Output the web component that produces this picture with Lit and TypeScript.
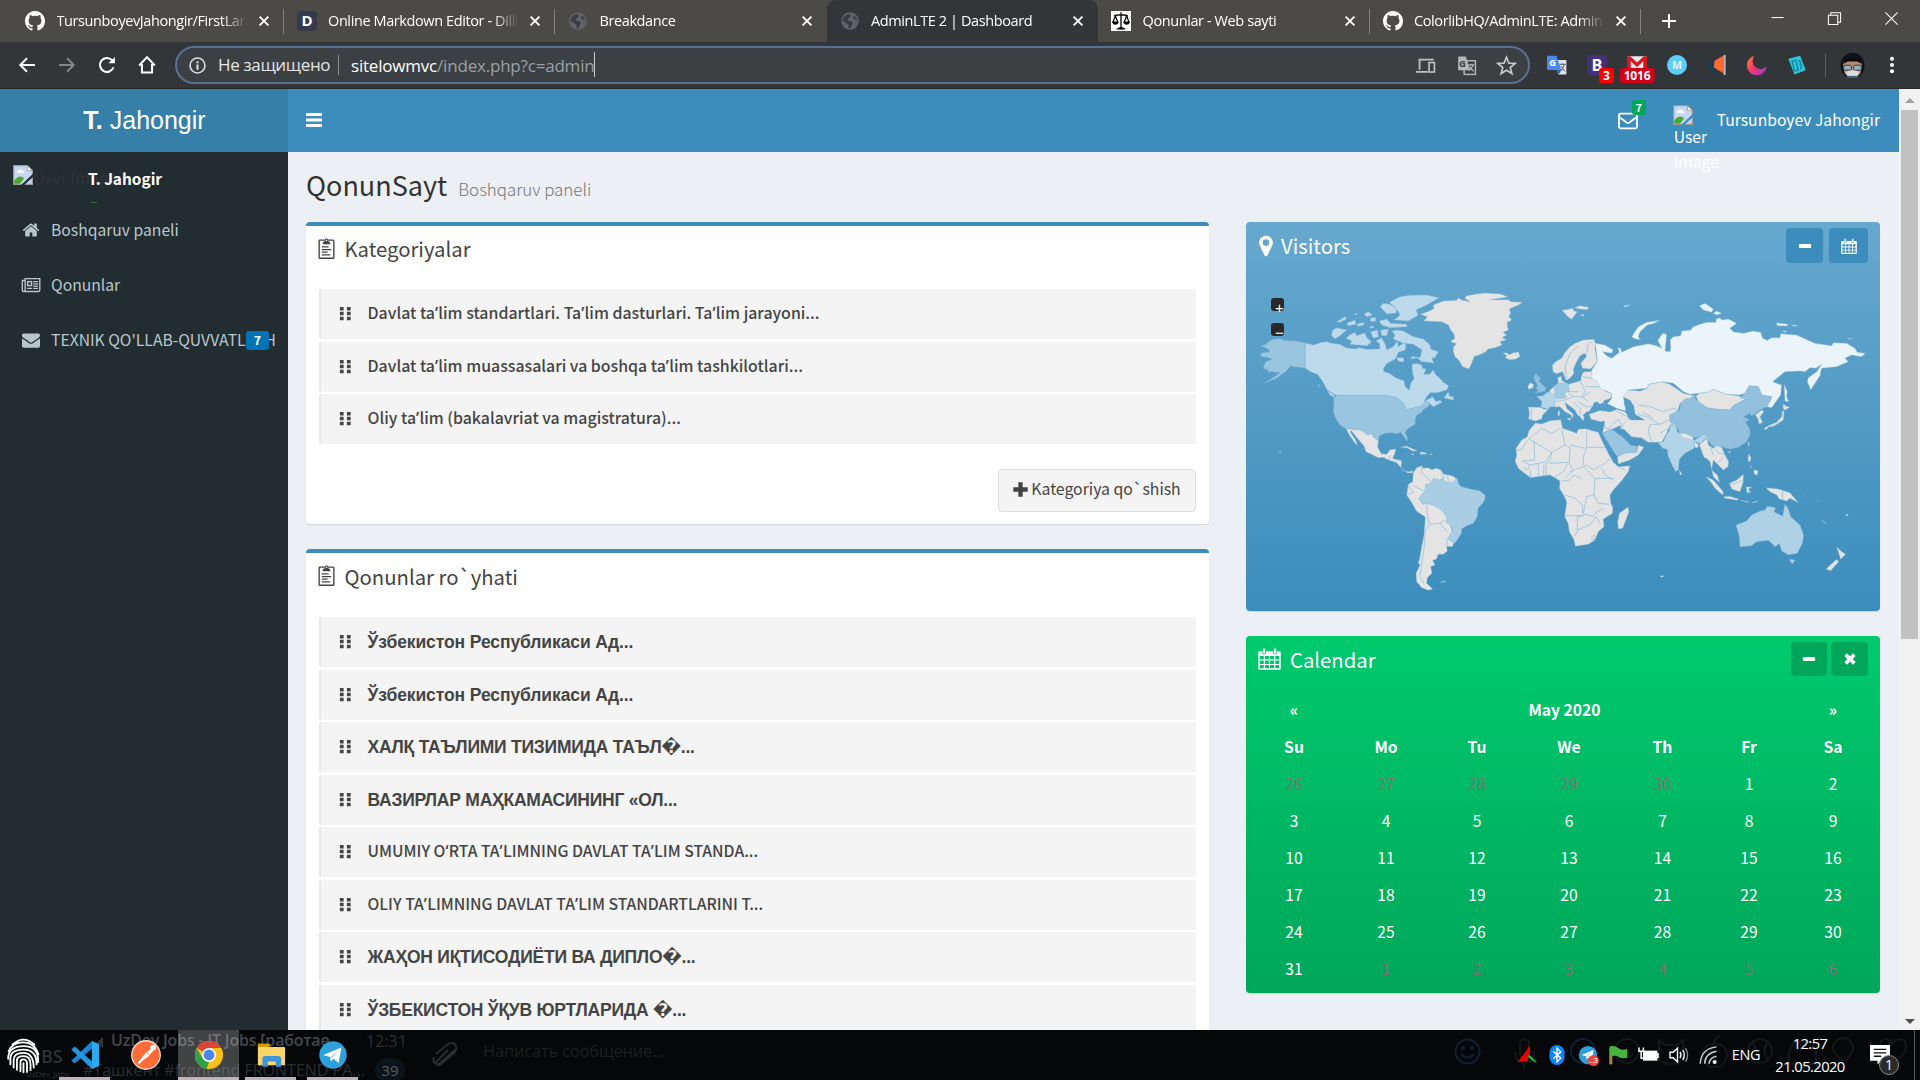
import { LitElement, html, svg, css, nothing } from "lit";
import { customElement, property } from "lit/decorators.js";

const ICONS: Record<string, any> = {
  github: svg`<path fill="#fff" d="M8 0C3.580 0 0 3.580 0 8c0 3.540 2.290 6.530 5.470 7.590.4.070.55-.17.55-.38 0-.19-.01-.82-.01-1.490-2.010.37-2.530-.49-2.690-.94-.09-.23-.48-.94-.82-1.130-.28-.15-.68-.52-.01-.53.63-.01 1.080.58 1.230.82.72 1.210 1.870.87 2.330.66.070-.52.28-.87.51-1.070-1.780-.2-3.640-.89-3.640-3.950 0-.87.31-1.590.82-2.150-.08-.2-.36-1.020.08-2.120 0 0 .67-.21 2.200.82.64-.18 1.320-.27 2-.27s1.360.09 2 .27c1.530-1.040 2.200-.82 2.200-.82.44 1.100.16 1.920.08 2.120.51.56.82 1.270.82 2.150 0 3.070-1.870 3.750-3.650 3.950.29.25.54.73.54 1.480 0 1.070-.01 1.930-.01 2.200 0 .21.15.46.55.38A8 8 0 0 0 16 8c0-4.420-3.580-8-8-8z"/>`,
  dmark: svg`<rect width="16" height="16" rx="3" fill="#35394c"/><text x="8" y="12.200" font-size="12" font-weight="700" font-family="Open Sans, sans-serif" text-anchor="middle" fill="#fff">D</text>`,
  globe: svg`<circle cx="8" cy="8" r="7" fill="#5f6368"/><path fill="#3a3d40" d="M3.500 4.500Q6 1.800 8.500 3L8 5 6 6.500l1 1.500 2.500.3 1 1.700-1.500 1.500L8.500 14 7 13.500l-.3-2.500L4 9 1.800 7.800Q2 6 3.500 4.500zM11 3.500l2 1.700.6 2-1.600-.2-1.500-1.500z"/>`,
  scales: svg`<rect width="16" height="16" fill="#fff"/><g fill="none" stroke="#111" stroke-width="1.100"><path d="M8 1v13M2.500 4q5.500-2 11 0M4.500 14.300h7"/><path d="M3.500 4L1.500 9h4zM12.500 4l-2 5h4z"/></g><path d="M1 9h5q-.5 2-2.500 2T1 9zM10 9h5q-.5 2-2.500 2T10 9zM6 13h4v1.500H6z"/>`,
  close: svg`<path d="M3 3l10 10M13 3L3 13" stroke="#fff" stroke-width="2.200"/>`,
  plus: svg`<path d="M8 1v14M1 8h14" stroke="#fff" stroke-width="2"/>`,
  back: svg`<path d="M15 8H2M8 2L2 8l6 6" fill="none" stroke="#fff" stroke-width="1.700"/>`,
  fwd: svg`<path d="M1 8h13M8 2l6 6-6 6" fill="none" stroke="#85878a" stroke-width="1.700"/>`,
  reload: svg`<path d="M13.800 10A6.200 6.200 0 1 1 12.500 3.700L14 5.200" fill="none" stroke="#fff" stroke-width="1.800"/><path d="M15 .8v5.700H9.300z" fill="#fff"/>`,
  home: svg`<path d="M1 8.500L8 1l7 7.500M3.500 7v7.700h9V7" fill="none" stroke="#fff" stroke-width="1.800"/>`,
  info: svg`<circle cx="8" cy="8" r="7" fill="none" stroke="#dcdde0" stroke-width="1.500"/><path d="M8 4v1.800M8 7v5" stroke="#dcdde0" stroke-width="2"/>`,
  devices: svg`<path d="M15 3H3v8.500M0 13.300h10" fill="none" stroke="#bfc1c4" stroke-width="1.500"/><rect x="11" y="5.500" width="4.500" height="8" fill="none" stroke="#bfc1c4" stroke-width="1.400"/>`,
  translate: svg`<rect x="6" y="4" width="9.500" height="11.500" fill="none" stroke="#b5b7ba" stroke-width="1.200"/><path d="M1 .5h6.500l3.500 11.500H1z" fill="#b5b7ba"/><text x="4.500" y="9" font-size="8" font-weight="700" text-anchor="middle" font-family="Open Sans, sans-serif" fill="#3c4043">G</text><path d="M9.500 7.500h5M12 6.500v1M13.500 7.500q-1 3.500-3.500 5M10.500 9l3.500 4" stroke="#b5b7ba" fill="none"/>`,
  star: svg`<path d="M8 1l2 5 5.300.3-4.200 3.400 1.500 5.100L8 12l-4.600 2.800 1.500-5.100L.7 6.300 6 6z" fill="none" stroke="#c6c8ca" stroke-width="1.400"/>`,
  gtrans: svg`<path d="M6 4h9.500v11.500H9z" fill="#dfe1e4"/><path d="M0 .5h7.500L11.500 12H1q-1 0-1-1z" fill="#4a89f3"/><path d="M8 12h3.500L9.500 15.500z" fill="#2b5fc0"/><text x="4.500" y="8.800" font-size="7.500" font-weight="700" text-anchor="middle" font-family="Open Sans, sans-serif" fill="#fff">G</text><path d="M10 7.500h5M12.500 6.500v1M14 7.500q-1 3-3 5M11 9l3.500 4" stroke="#69717c" fill="none" stroke-width=".9"/>`,
  boot: svg`<rect width="16" height="16" rx="3" fill="#45307a"/><text x="8" y="12.500" font-size="13" font-weight="700" text-anchor="middle" font-family="Open Sans, sans-serif" fill="#fff">B</text>`,
  gmail: svg`<rect y="1" width="16" height="12" fill="#e9e9e9"/><path d="M0 1h2.500L8 6l5.500-5H16v12h-3V5L8 9.500 3 5v8H0z" fill="#d8141c"/>`,
  mcircle: svg`<circle cx="8" cy="8" r="8" fill="#5dcdfa"/><text x="8" y="11" font-size="8.500" font-weight="700" text-anchor="middle" font-family="Open Sans, sans-serif" fill="#e2f7ff">M</text>`,
  horn: svg`<path d="M1 5l5-.5L5 10.500H1q-2-2.500 0-5.500zM3 10h3l1.500 5-4 .5z" fill="#1d3b52"/><path d="M6 4.500L13.300.3V14.500L5.500 10z" fill="#ff6a33"/><path d="M13.300 0h1.600v16h-1.600z" fill="#b9bec2"/>`,
  moon: svg`<defs><linearGradient id="mg" x1="0" y1="0" x2="1" y2="1"><stop offset="0" stop-color="#ff7b35"/><stop offset=".5" stop-color="#f0386b"/><stop offset="1" stop-color="#8a39d8"/></linearGradient></defs><path d="M6 .5A8 8 0 1 0 15.800 9 6 6 0 0 1 6 .5z" fill="url(#mg)"/>`,
  note: svg`<path d="M1 3l9.500-2.500L15 12l-9 3.500z" fill="#2fc4dd"/><path d="M4 5l3-.7L9 12l-3 .8zM9 4.500q2.500 0 1.500 3 2 1 0 4" fill="none" stroke="#0e7f96"/>`,
  avatar: svg`<ellipse cx="8" cy="8" rx="7.700" ry="8.200" fill="#111217"/><path d="M2 7q0-3 6-3t6 3-1 6l-2 2H5l-2-2Q2 10 2 7z" fill="#b88a75"/><path d="M2 7q1-4 6-4t6 4l-3-1.500H5z" fill="#0c0c10"/><rect x="2.300" y="7.800" width="5" height="3.200" rx="1" fill="#8fb2bd" stroke="#222" stroke-width=".5"/><rect x="8.700" y="7.800" width="5" height="3.200" rx="1" fill="#8fb2bd" stroke="#222" stroke-width=".5"/><path d="M3.500 12q4.500-2 9 0l-1.300 2.500H4.800z" fill="#d3dfe2"/><path d="M4 15h8l-1 1H5z" fill="#2a6a8f"/>`,
  dots: svg`<g fill="#fff"><circle cx="8" cy="2.500" r="1.800"/><circle cx="8" cy="8" r="1.800"/><circle cx="8" cy="13.500" r="1.800"/></g>`,
  bars: svg`<path d="M0 1h16v3H0zM0 6.500h16v3H0zM0 12h16v3H0z" fill="currentColor"/>`,
  mailo: svg`<rect x=".8" y="2" width="14.400" height="11.800" rx="1.200" fill="none" stroke="#fff" stroke-width="1.400"/><path d="M1 5q4.500 3 6 4.300 1 .8 2 0Q10.500 8 15 5" fill="none" stroke="#fff" stroke-width="1.400"/>`,
  broken: svg`<path d="M.5.5h11l4 4v11H.5z" fill="#c7d8f2" stroke="#9a9a9a"/><path d="M11.500.5v4h4z" fill="#fff" stroke="#9a9a9a" stroke-width=".7"/><path d="M3 6q0-2 2-2 2-1 3 1 1.500 0 1 1.500z" fill="#fff"/><path d="M1 15v-2.500Q5 7 9 10.500L5.500 15z" fill="#4ba82e"/><path d="M16 7L6.500 16H9l7-6.500z" fill="currentColor"/>`,
  fahome: svg`<path transform="scale(.008929)" fill="currentColor" d="M1472 992v480q0 26-19 45t-45 19h-384v-384h-256v384h-384q-26 0-45-19t-19-45v-480q0-1 .5-3t.5-3l575-474 575 474q1 2 1 6zm223-69l-62 74q-8 9-21 11h-3q-13 0-21-7l-692-577-692 577q-12 8-24 7-13-2-21-11l-62-74q-8-10-7-23.500t11-21.500l719-599q32-26 76-26t76 26l244 204v-195q0-14 9-23t23-9h192q14 0 23 9t9 23v408l219 182q10 8 11 21.500t-7 23.500z"/>`,
  news: svg`<path d="M2.800 4H.3v8.600q0 1.200 1.100 1.200h13q1.400 0 1.400-1.200V2.300H2.800v10q0 1.300-1.200 1.300" fill="none" stroke="currentColor" stroke-width="1.200"/><rect x="5" y="5" width="3.500" height="3.500" fill="none" stroke="currentColor" stroke-width="1.300"/><path d="M10 5h4.300M10 7h4.300M10 9h4.300M4.500 11h4.500M10 11h4.300" stroke="currentColor" stroke-width="1.200"/>`,
  envelope: svg`<path transform="scale(.008929)" fill="currentColor" d="M1792 710v794q0 66-47 113t-113 47h-1472q-66 0-113-47t-47-113v-794q44 49 101 87 362 246 497 345 57 42 92.500 65.500t94.500 48 110 24.500h2q51 0 110-24.500t94.500-48 92.500-65.500q170-123 498-345 57-39 100-87zm0-294q0 79-49 151t-122 123q-376 261-468 325-10 7-42.500 31t-54 38.500-52 32.500-57.500 27-50 9h-2q-23 0-50-9t-57.500-27-52-32.500-54-38.500-42.500-31q-91-64-262-182.500t-205-142.500q-62-42-117-115.500t-55-136.500q0-78 41.500-130t118.500-52h1472q65 0 112.500 47t47.500 113z"/>`,
  clipboard: svg`<rect x="1" y="2" width="14" height="17.300" rx=".8" fill="none" stroke="currentColor" stroke-width="1.300"/><path d="M4.200 6Q4.200 3.600 6.300 3q0-2.700 1.700-2.700T9.700 3q2.100.6 2.100 3z" fill="currentColor"/><circle cx="8" cy="2.200" r=".8" fill="#fff"/><path d="M3.500 8.500h6.500M3.500 11h9M3.500 13.500h5.500M3.500 16h8" stroke="currentColor" stroke-width="1.200"/>`,
  marker: svg`<path transform="scale(.008929)" fill="currentColor" d="M1152 640q0-106-75-181t-181-75-181 75-75 181 75 181 181 75 181-75 75-181zm256 0q0 109-33 179l-364 774q-16 33-47.500 52t-67.500 19-67.500-19-46.500-52l-365-774q-33-70-33-179 0-212 150-362t362-150 362 150 150 362z"/>`,
  calendar: svg`<path d="M1 3h14q.8 0 .8 1v11q0 .9-.8.9H1q-.8 0-.8-.9V4Q.2 3 1 3z" fill="#fff"/><path d="M3.200.8h2v4h-2zM10.800.8h2v4h-2z" fill="#fff" stroke="var(--bg)" stroke-width=".5"/><g fill="var(--bg)"><path d="M1.400 6.300h2.600v2.300H1.400zM4.800 6.300h2.800v2.300H4.800zM8.400 6.300h2.800v2.300H8.400zM12 6.300h2.600v2.300H12zM1.400 9.400h2.600v2.400H1.400zM4.800 9.400h2.800v2.400H4.800zM8.400 9.400h2.800v2.400H8.400zM12 9.400h2.600v2.400H12zM1.400 12.600h2.600v2.100H1.400zM4.800 12.600h2.800v2.100H4.800zM8.400 12.600h2.800v2.100H8.400zM12 12.600h2.600v2.100H12z"/></g>`,
  minus: svg`<rect x="1" y="5.800" width="14" height="4.400" rx="1.200" fill="currentColor"/>`,
  times: svg`<path d="M3 3l10 10M13 3L3 13" stroke="currentColor" stroke-width="4.200"/>`,
  add: svg`<path d="M8 .3v15.400M.3 8h15.400" stroke="currentColor" stroke-width="4.600"/>`,
  grip: svg`<g fill="currentColor"><path d="M2 1h4v3.700H2zM2 6.200h4v3.700H2zM2 11.400h4v3.700H2zM9.500 1h4v3.700h-4zM9.500 6.200h4v3.700h-4zM9.500 11.400h4v3.700h-4z"/></g>`,
  winmin: svg`<path d="M1.500 7h13" stroke="#fff" stroke-width="1.100"/>`,
  winmax: svg`<path d="M1.500 4.500h10v10h-10zM4 4.500V1.800h10.500V12h-3" fill="none" stroke="#fff" stroke-width="1.100"/>`,
  winclose: svg`<path d="M1.500 1.500l13 13M14.500 1.500l-13 13" stroke="#fff" stroke-width="1.100"/>`,
  finger: svg`<g fill="none" stroke="#fff" stroke-width=".85" stroke-linecap="round"><path d="M3 3Q8-1.500 13 3M1.200 6Q3 2 8 2t6.800 5.500M1 9.500Q1 3.700 8 3.700t6.700 7.300M2 12V9.500Q2 5.300 8 5.300T14 12M3.500 13.500V10Q3.500 6.800 8 6.800t4.700 6.700M5 14.500V10Q5.200 8.300 8 8.300q3.200 0 3.200 3.700v2.700M6.600 15.200V11q0-1.200 1.400-1.200t1.600 1.700v4M8 15.700V11.500"/></g>`,
  vscode: svg`<path d="M11.700.5L15.500 2.200v11.600l-3.800 1.700z" fill="#2aa8f2"/><path d="M11.700.5v4.200L2.500 12.500.7 11z" fill="#1c85d1"/><path d="M11.700 15.500v-4.200L2.500 3.500.7 5z" fill="#2596e0"/>`,
  postman: svg`<circle cx="8" cy="8" r="7.600" fill="#ff6c37" stroke="#f6d9cd" stroke-width=".7"/><path d="M4 12.500L8.500 7l1.500 1.200zM8.500 6.500l2.200-2 1.300 1.200-2 2z" fill="#fff"/><circle cx="11.800" cy="4" r="1.500" fill="#fff"/><path d="M4 12.500L8.500 7" stroke="#fff" stroke-width="1.100"/>`,
  chrome: svg`<circle cx="8" cy="8" r="7.500" fill="#fbc116"/><path d="M8 8L1.500 4.250A7.500 7.500 0 0 1 14.500 4.250H8z" fill="#db4437"/><path d="M1.500 4.250L4.700 10 8 11.600l-1.300 3.800A7.500 7.500 0 0 1 1.500 4.250z" fill="#2fa04e"/><circle cx="8" cy="8" r="3.700" fill="#fff"/><circle cx="8" cy="8" r="2.900" fill="#4a86f0"/>`,
  folder: svg`<path d="M1 2h6l1 1.500H1z" fill="#d99a08"/><path d="M1 2h6v3H1z" fill="#d99a08"/><rect x="1" y="3.700" width="14.500" height="9.800" rx=".5" fill="#fbd567"/><path d="M3.400 14.300V10q0-1.500 1.500-1.500h7q1.500 0 1.500 1.500v4.300h-2.900V11.500H6.300v2.800z" fill="#3f94d9"/>`,
  telegram: svg`<circle cx="8" cy="8" r="7.300" fill="#2ca1db"/><path d="M2.800 8L12.500 4 11 12.200 8.200 10 6.800 11.500 6.500 9z" fill="#fff"/><path d="M6.500 9l4.500-3.700-3.500 4.500z" fill="#bcd9ea"/>`,
  radar: svg`<path d="M.5 13.500L8 4l1.500-3.500L10.500 3l-1 6-1.500 4.500-2-1z" fill="#f00000"/><path d="M9.500 7.500l6.500 6.500-2-.5-5-4z" fill="#0cdb3b"/>`,
  bt: svg`<rect x="2" y="0" width="12" height="16" rx="6" fill="#0a84ff"/><path d="M5 5l6 5.500L8 13.500v-11l3 3L5 11" fill="none" stroke="#fff" stroke-width="1.100"/>`,
  flag: svg`<path d="M1 2h2.500v13.500H1z" fill="#b07a45"/><path d="M1.500 1q4-1 7 1.500T15.500 3v7q-4 1.500-7-.5t-7 0z" fill="#46b441"/>`,
  battery: svg`<rect x="4.500" y="5" width="10.500" height="7" fill="#fff" stroke="#fff"/><path d="M15.200 7H16v3h-.8M.8 2v3h3.500V2M2.500 5v5.500H5" fill="none" stroke="#fff" stroke-width="1.200"/>`,
  speaker: svg`<path d="M.8 5.800h2.500l3.500-3.300v11L3.300 10.200H.8z" fill="none" stroke="#fff" stroke-width="1.100"/><path d="M8.800 5.500q1.500 2.500 0 5M11 4q2.500 4 0 8" fill="none" stroke="#fff" stroke-width="1.100"/><path d="M13.200 2.500q3.300 5.500 0 11" fill="none" stroke="#888" stroke-width="1.100"/>`,
  wifi: svg`<path d="M1 15Q1.500 3 14 1.500M4.500 15Q5 6.500 14 5M8 15q.5-5 6-6" fill="none" stroke="#ccc" stroke-width="1.200"/><circle cx="12.500" cy="13.500" r="1.600" fill="#fff"/>`,
  action: svg`<path d="M0 0h16v12.500H9L6 15.500v-3H0z" fill="#fff"/><path d="M3 3.500h10M3 6.300h10M3 9h6" stroke="#111" stroke-width="1.100"/>`,
};

const icon = (name: string, cls = "") =>
  html`<svg class="ic ${cls}" viewBox=${name === "clipboard" ? "0 0 16 20" : "0 0 16 16"}>${ICONS[name]}</svg>`;

const shared = css`
  :host { display: block; box-sizing: border-box; }
  * { box-sizing: border-box; }
  .ic { display: block; width: 20px; height: 20px; flex: none; overflow: visible; }
`;

@customElement("browser-chrome")
class BrowserChrome extends LitElement {
  static styles = [shared, css`
    :host { height: 89px; font: 14.500px/20px "Open Sans", sans-serif; color: #fff; background: #323639; border-bottom: 1px solid #27292b; }
    .strip { height: 42px; background: #4c4a47; display: flex; padding-left: 12px; }
    .tab { width: 271.500px; height: 42px; padding: 0 10px 0 13px; display: flex; align-items: center; position: relative; }
    .tab .t { flex: 1; margin: 0 8px 0 11.500px; overflow: hidden; white-space: nowrap; letter-spacing: -.4px; -webkit-mask-image: linear-gradient(90deg, #000 86%, transparent); mask-image: linear-gradient(90deg, #000 86%, transparent); }
    .tab .x { width: 16px; height: 16px; margin-right: 2px; padding: 1px; }
    .tab.sep::after { content: ""; position: absolute; right: 0; top: 9px; width: 1px; height: 25px; background: #85837f; }
    .tab.on { background: #323639; border-radius: 9px 9px 0 0; }
    .new { margin: 13px 0 0 20px; width: 16px; height: 16px; }
    .win { margin-left: auto; display: flex; gap: 42px; padding: 11px 21px 0 0; }
    .win .ic { width: 15px; height: 15px; }
    .bar { height: 46px; display: flex; align-items: center; padding: 0 17px 0 18px; }
    .nav { display: flex; gap: 22px; }
    .nav .ic { width: 18px; height: 18px; }
    .omni { margin-left: 19px; width: 1355px; height: 38px; border: 2px solid #5a7096; border-radius: 19px; background: #3c4043; display: flex; align-items: center; padding: 0 12px 0 12px; font-size: 17px; }
    .omni .ic { width: 17px; height: 17px; }
    .ns { margin-left: 12px; color: #e4e5e7; letter-spacing: -.35px; width: 111px; white-space: nowrap; }
    .vs { width: 1px; height: 20px; background: #8b8e91; margin: 0 12px 0 9px; }
    .url { color: #9aa0a6; white-space: nowrap; letter-spacing: -.2px; border-right: 1px solid #c8cbd0; height: 25px; line-height: 25px; margin-top: -2px; padding-top: 1px; }
    .url b { color: #fff; font-weight: 400; }
    .omni .right { margin-left: auto; display: flex; gap: 21.500px; align-items: center; }
    .omni .right .ic { width: 19px; height: 19px; }
    .ext { display: flex; gap: 20px; margin-left: 17px; align-items: center; }
    .e { position: relative; width: 20px; height: 20px; }
    .badge { position: absolute; top: 13px; left: 50%; background: #f00; border-radius: 3px; font: 700 12px/15px "Open Sans", sans-serif; height: 15px; padding: 0 4px; letter-spacing: -.2px; }
    .b0 { transform: translateX(2px); }
    .b1 { transform: translateX(-50%); background: #d0021b; }
    .xs { width: 1px; height: 24px; background: #5c5f62; margin-left: 18px; }
    .av { width: 25px; height: 25px; margin-left: 14px; }
    .more { width: 18px; height: 18px; margin-left: 18px; }
  `];
  render() {
    const tabs = [
      ["github", "TursunboyevJahongir/FirstLaravel", "sep"],
      ["dmark", "Online Markdown Editor - Dillinger", "sep"],
      ["globe", "Breakdance", ""],
      ["globe", "AdminLTE 2 | Dashboard", "on"],
      ["scales", "Qonunlar - Web sayti", "sep"],
      ["github", "ColorlibHQ/AdminLTE: AdminLTE", "sep"],
    ];
    return html`
      <div class="strip">
        ${tabs.map(([i, t, c]) => html`<div class="tab ${c}">${icon(i)}<span class="t">${t}</span>${icon("close", "x")}</div>`)}
        ${icon("plus", "new")}
        <div class="win">${icon("winmin")}${icon("winmax")}${icon("winclose")}</div>
      </div>
      <div class="bar">
        <div class="nav">${["back", "fwd", "reload", "home"].map((n) => icon(n))}</div>
        <div class="omni">
          ${icon("info")}<span class="ns">Не защищено</span><span class="vs"></span>
          <span class="url"><b>sitelowmvc</b>/index.php?c=admin</span>
          <div class="right">${["devices", "translate", "star"].map((n) => icon(n))}</div>
        </div>
        <div class="ext">
          ${["gtrans", "boot", "gmail", "mcircle", "horn", "moon", "note"].map((n) => html`<div class="e">${icon(n)}${n === "boot" ? html`<span class="badge b0">3</span>` : n === "gmail" ? html`<span class="badge b1">1016</span>` : nothing}</div>`)}
        </div>
        <span class="xs"></span>${icon("avatar", "av")}${icon("dots", "more")}
      </div>`;
  }
}

@customElement("side-nav")
class SideNav extends LitElement {
  static styles = [shared, css`
    :host { width: 288px; flex: none; background: #222d32; color: #b8c7ce; }
    .brand { height: 63px; background: #367fa9; color: #fff; text-align: center; font: 25px/62px "Liberation Sans", Arial, sans-serif; padding-left: 1px; }
    .user { height: 50px; padding: 13px 0 0 13px; position: relative; display: flex; color: #222d32; }
    .alt { color: #333; font-size: 16px; line-height: 24px; }
    .name { position: absolute; left: 88px; top: 14px; color: #fff; font-weight: 700; font-size: 15.400px; line-height: 24px; }
    .dash { position: absolute; left: 91px; top: 50px; width: 6px; height: 1px; background: #2f7a3b; }
    .item { height: 55px; display: flex; align-items: center; padding-left: 22px; font-size: 15.700px; white-space: nowrap; position: relative; }
    .item span { margin-left: 11px; }
    .item .ic { width: 18px; height: 18px; }
    .item .count { position: absolute; right: 19px; top: 19px; margin: 0; width: 23px; height: 19px; border-radius: 3px; background: #0073b7; color: #fff; font: 700 12.500px/18px "Noto Sans CJK SC", sans-serif; text-align: center; }
  `];
  render() {
    return html`
      <div class="brand"><b>T.</b> Jahongir</div>
      <div class="user">${icon("broken")}<span class="alt">User Image</span><span class="name">T. Jahogir</span><i class="dash"></i></div>
      <div class="item">${icon("fahome")}<span>Boshqaruv paneli</span></div>
      <div class="item">${icon("news")}<span>Qonunlar</span></div>
      <div class="item">${icon("envelope")}<span>TEXNIK QO'LLAB-QUVVATLASH</span><span class="count">7</span></div>`;
  }
}

@customElement("list-box")
class ListBox extends LitElement {
  @property() heading = "";
  @property({ attribute: false }) rows: string[] = [];
  @property() action = "";
  static styles = [shared, css`
    :host { background: #fff; border-top: 4px solid #3c8dbc; border-radius: 4px; box-shadow: 0 1px 1px rgba(0,0,0,.12); color: #444; padding: 0 13px 0 12.500px; }
    .h { height: var(--head, 63px); display: flex; gap: 10px; font-size: 20.300px; line-height: var(--lh, 45px); margin-left: -1px; }
    .h .ic { width: 17px; height: 21px; margin-top: 12px; }
    .row { height: 50px; margin-bottom: 2.500px; background: #f4f4f4; border-left: 2.500px solid #e6e7e8; border-radius: 2px; display: flex; align-items: center; padding: 0 0 1px 17px; gap: 15px; font-size: 15.900px; font-weight: 500; white-space: nowrap; }
    .row .ic { width: 15px; height: 15px; }
    .cyr { font: 700 17.500px/24px "Liberation Sans", "DejaVu Sans", sans-serif; letter-spacing: -.1px; padding-top: 1px; }
    .cyr.up { letter-spacing: -.24px; }
    .lat { line-height: 23px; margin-top: -1px; }
    .lat.up { font-size: 15.700px; }
    .q { font-family: "Open Sans", sans-serif; font-weight: 600; letter-spacing: .3px; }
    .foot { display: flex; justify-content: flex-end; padding-top: 22.500px; }
    .btn { height: 43px; width: 198px; border: 1px solid #ddd; border-radius: 4px; background: #f4f4f4; display: flex; align-items: center; justify-content: center; gap: 3px; font-size: 15.800px; white-space: nowrap; line-height: 38px; padding-bottom: 3px; }
    .btn .ic { width: 15px; height: 15px; }
  `];
  private label(r: string) {
    const cls = (/[А-я]/.test(r) ? "cyr" : "lat") + (r === r.toUpperCase() ? " up" : "");
    const parts = cls.startsWith("lat") ? r.split(/([‘’])/) : [r];
    return html`<span class=${cls}>${parts.map((p) => (/^[‘’]$/.test(p) ? html`<span class="q">${p}</span>` : p))}</span>`;
  }
  render() {
    return html`
      <div class="h">${icon("clipboard")}<span>${this.heading}</span></div>
      ${this.rows.map((r) => html`<div class="row">${icon("grip")}${this.label(r)}</div>`)}
      ${this.action ? html`<div class="foot"><div class="btn">${icon("add")}<span>${this.action}</span></div></div>` : nothing}`;
  }
}

/* Map units: three per pixel, shared by all shapes; eastern shapes are shifted by 990. */
const WEST: [string, string][] = [
  ["#9ac5e0", "M62 392L80 388 84 381 100 373 118 371 135 377 160 377 196 384V460L182 457 160 455 150 452 147 459 136 470 122 481 105 492 75 503 100 488 122 472 106 472 96 469 86 472 84 464 70 460 76 441 96 433 82 427 62 424 64 415 88 411 86 403z"],
  ["#bcdaeb", "M196 384L220 390 245 382 262 380 270 384 300 388 318 398 345 402 358 398 380 403 420 402 418 385 408 378 425 368 436 388 440 404 460 395 472 378 475 395 490 384 498 390 496 405 475 412 466 432 440 446 430 462 432 470 448 475 470 490 492 497 496 515 508 526 512 505 522 492 518 475 516 460 518 446 535 446 545 450 547 460 558 462 552 478 568 478 580 465 588 480 600 490 610 502 626 512 620 525 590 533 570 533 560 545 552 560 578 545 588 560 600 556 606 562 580 575 566 563 545 572 496 586 492 568 480 556 465 547 430 541H288L262 525 245 495 232 478 215 472 196 460zM612 548L625 530 628 543 640 545 641 555 625 552zM262 528L280 538 288 550 270 540zM236 508l5 8-5-2z"],
  ["#bcdaeb", "M448 262L480 245 510 241 560 240 597 248 560 270 528 285 535 300 505 318 462 315 480 300 472 285zM420 275L430 265 450 268 470 283 468 294 440 297zM455 348L470 345 490 348 520 365 550 372 570 390 572 402 595 410 585 428 575 430 582 445 565 442 545 440 530 428 512 432 516 424 540 428 546 405 520 388 490 385 460 372 465 360zM318 370L328 360 345 352 350 362 375 353 380 368 395 380 382 392 350 390 330 388 335 378zM274 362L278 345 290 338 320 345 300 362 285 372zM418 318L440 312 452 325 500 328 502 335 450 338 425 330zM392 350L412 345 416 365 400 370zM422 345L446 343 440 362 425 362zM290 320L315 305 320 312 300 322zM320 325L345 315 348 328 325 332zM350 328L370 322 372 330 355 334zM372 298L385 290 398 300 380 305zM392 308L408 308 405 320 390 318zM468 428L490 428 492 440 478 440zM340 298l10-4 2 5zM388 335l12-2 2 5-10 2z"],
  ["#9ac5e0", "M280 541L288 550 288 541H430L465 547 480 556 492 568 496 586 525 578 545 572 558 556 566 563 568 572 548 585 545 592 528 602 525 618 526 627 505 640 495 652 502 668 502 679 490 662 482 652 468 656 455 653 435 655 418 662 415 677 402 668 395 656 383 660 365 646 318 641 300 630 288 612 280 590 282 560zM118 709h5v4h-5z"],
  ["#e4e4e4", "M318 641L365 646 383 660 395 656 402 668 415 677 413 697 424 716 440 718 450 704 468 702 464 716 458 730 485 737 483 755 492 768 505 770 518 768 520 773 502 774 482 757 470 743 445 735 430 727 415 728 378 710 372 693 348 665 335 648 330 650 345 672 353 691 345 685 328 660zM482 697L498 693 515 700 532 708 518 708 500 698zM540 711l12 1 11 5-22 1zM514 717h8v2h-8zM571 717h6v2h-6zM510 683l3 8"],
  ["#e4e4e4", "M520 773L530 758 546 752 550 760 565 758 575 764 590 760 603 765 612 778 636 782 652 792 656 808 600 830 636 945 640 985 638 995 620 994 622 1008 610 1018 594 1018 590 1032 578 1036 585 1050 572 1055 576 1075 562 1088 560 1105 578 1122 565 1126 545 1118 530 1100 528 1075 540 1050 534 1043 538 1035 545 995 552 960 556 906 530 889 518 868 500 840 505 808 518 800zM602 1100h8l-3 4zM611 1098h7l-5 4z"],
  ["#a9cee4", "M556 808L572 805 580 790 600 795 606 788 615 800 640 802 648 790 656 808 665 815 690 822 720 828 735 840 735 852 728 865 714 880 712 905 700 925 680 932 665 942 664 955 652 975 642 986 622 970 638 948 634 932 618 922 620 908 605 885 578 870 560 866 548 868 536 850 548 835 556 828z"],
  ["#e4e4e4", "M541 298L570 287 582 280 580 270 610 258 650 256 654 249 668 256 690 260 674 250 680 242 710 237 735 234 770 236 785 238 803 246 750 254 806 254 812 260 848 262 835 270 808 282 812 295 806 305 816 315 802 322 802 335 806 345 790 352 800 360 786 368 800 374 780 380 786 390 765 398 745 402 735 412 712 422 703 424 695 445 687 462 668 455 656 435 645 425 640 410 640 395 650 386 634 382 634 376 644 372 642 358 632 345 625 330 605 320 552 318 562 305zM789 414L800 413 808 419 820 413 836 411 840 425 825 433 808 434 796 429 800 422z"],
  ["#93c0dc", "M882 488L888 474 893 484 901 488 897 498 908 510 918 518 915 528 885 534 898 525 888 522 893 512 887 502z"],
  ["#e4e4e4", "M863 515L870 503 880 508 879 519 866 523zM865 576L885 577 903 577 910 582 925 583 908 600 905 612 886 618 866 612 868 595z"],
  ["#e4e4e4", "M928 527L945 512 955 503 953 488 963 483 966 497 985 508 1022 497 1025 480 1032 470 1060 469 1070 500 1085 507 1095 528 1115 535 1112 550 1090 558 1095 568 1083 572 1072 560 1062 563 1060 575 1060 588 1040 590 1028 602 1033 605 1030 618 1020 605 1012 600 1005 585 985 570 975 562 980 580 1000 598 997 612 993 600 975 590 960 575 945 577 940 555zM980 609l13 1-3 7zM954 588l5-1v14l-5 2z"],
  ["#e4e4e4", "M937 450L950 438 965 430 975 412 990 395 1005 385 1030 375 1062 373 1067 385 1065 400 1072 440 1052 462 1028 460 1022 445 1040 424 1034 415 1020 422 1010 440 1000 462 1002 475 990 490 978 496 968 470 950 476 939 470zM966 285L978 284 998 280 1002 288 1012 290 995 313 985 307zM1003 278L1020 272 1048 277 1040 284 1018 282zM1020 300l12-2v6z"],
  ["#b5d6e9", "M890 543L908 543 925 530 948 543 943 560 946 575 930 576 926 582 903 577 906 560z"],
  ["#9fcbe3", "M945 512L958 503 985 507 988 528 972 536 980 548 950 552 943 535z"],
  ["#e4e4e4", "M886 624L905 627 930 617 962 614 968 640 990 647 1010 655 1015 643 1035 641 1075 652 1085 675 1105 715 1120 742 1135 755 1170 752 1165 770 1145 797 1120 825 1110 840 1112 865 1118 875 1118 895 1090 912 1092 935 1075 950 1065 975 1045 988 1006 994 1002 975 988 950 984 925 974 905 980 862 972 842 958 820 960 798 945 788 930 780 900 784 872 788 850 772 835 760 825 738 830 722 828 700 845 675 862 665 866 648z"],
];
const EAST: [string, string][] = [
  ["#e4e4e4", "M58 597L90 586 120 590 138 582 165 590 172 600 185 612 190 640 230 682 215 668 185 665 165 645 150 632 125 643 97 655 105 618 92 620 62 612z"],
  ["#e4e4e4", "M158 545L163 530 175 525 210 528 232 520 235 508 275 500 300 508 340 535 378 543 330 565 325 585 300 605 318 630 300 630 290 655 275 682 235 682 215 668 185 665 165 645 150 640 172 612 182 615 225 615 195 598 192 575 178 555z"],
  ["#9ac5e0", "M97 655L125 643 160 668 172 680 180 690 203 695 200 712 165 715 142 725 130 708z"],
  ["#e4e4e4", "M142 725L165 715 200 712 205 690 222 697 205 720 180 735 145 747z"],
  ["#e4e4e4", "M378 543L388 535 420 530 428 522 470 538 505 542 528 552 490 572 480 585 440 583 410 578 385 560z"],
  ["#eaf4fa", "M76 385L105 390 130 405 125 415 98 410 110 422 125 430 148 412 143 398 152 400 155 412 190 395 235 386 260 392 275 400 263 376 278 355 290 358 288 380 285 408 300 410 302 400 300 375 310 365 332 362 335 348 362 345 370 335 390 328 410 322 438 322 438 312 450 308 455 315 475 312 500 325 480 340 490 350 520 355 550 348 572 352 578 370 592 376 605 368 630 368 632 356 680 360 712 375 735 385 785 392 790 383 830 385 855 400 862 412 886 415 875 425 845 420 825 430 835 440 800 455 755 460 750 482 722 525 712 500 715 488 740 470 755 448 738 460 720 458 705 470 690 468 645 470 608 500 635 510 632 540 605 578 590 575 605 545 575 540 565 515 538 512 525 535 508 540 470 538 428 522 420 530 388 535 360 538 340 530 310 505 275 500 235 508 232 520 175 525 160 545 168 588 140 580 112 566 125 550 124 535 90 520 80 500 65 490 65 465 82 440z"],
  ["#eaf4fa", "M185 365L205 335 230 322 270 316 250 326 232 330 210 350 205 366 212 374 195 372zM388 272L405 265 430 282 425 292 400 285zM430 295L440 288 455 295 440 300zM619 323L655 328 650 333 622 332zM666 329l19 3-14 2zM635 348h15l-5 4zM832 371l16-2-8 4zM160 272l22-3-16 7zM642 508L652 530 650 545 656 560 645 558z"],
  ["#93c0dc", "M298 600L330 585 332 565 345 552 360 550 368 542 385 560 410 578 440 583 480 585 490 572 528 552 510 548 525 535 538 512 565 515 575 540 605 545 600 560 590 575 578 580 560 592 545 602 540 595 520 605 538 614 526 622 538 640 540 660 530 680 505 697 480 702 455 695 435 697 425 690 412 672 400 660 380 668 330 655 318 630 300 622zM475 708l8 2-5 8z"],
  ["#b2d4e8", "M265 683L280 680 290 658 298 648 300 628 318 628 322 650 345 665 375 675 400 658 414 664 390 687 375 678 372 700 345 715 328 732 325 765 317 770 306 750 294 722 292 703 278 700z"],
  ["#e4e4e4", "M328 655L345 655 370 666 368 676 340 668zM373 678L386 690 382 700 374 696zM388 690L412 668 415 690 430 700 440 692 455 697 465 720 476 740 474 755 460 765 445 750 430 735 425 765 442 780 449 803 430 785 420 740 412 732 402 727zM328 765l8 12-6 4zM408 785L430 795 460 830 458 840 435 820 425 805zM460 845l18-1 28 8-4 4-37-6zM478 805L500 795 520 778 520 800 510 830 485 822zM528 815l18 2-11 5 8 12-8-3-3 6zM588 818L605 820 625 822 660 833 685 863 660 850 650 858 628 852 620 840 600 830zM535 717l8 10-2 12-7 0zM540 750l6 8-5-2zM552 765l12 2-2 14-10-4zM534 682l5 2-4 12zM582 640L600 630 620 622 635 605 638 585 642 590 640 615 612 633 595 636 588 645zM640 566l8 8 12 2-15 10-6-6zM555 600L575 585 582 590 570 605 578 622 568 628 563 610zM700 840l12 6M735 850l10 12M755 915l15 12-10-5zM826 900l9-4-3 8zM272 1082h8v4h-8zM510 856l28 4-6 2zM545 862l20-4-12 5zM690 838l8-8"],
  ["#aed1e6", "M498 930L530 918 545 900 570 888 585 885 592 874 617 878 612 890 638 904 645 868 655 882 662 905 690 930 701 960 697 985 682 1015 655 1019 635 1008 628 985 616 995 595 976 560 980 545 992 510 995 508 965zM657 1033L675 1035 667 1047z"],
  ["#e4e4e4", "M800 996L815 1010 827 1017 812 1033 808 1020zM800 1033L806 1040 782 1067 768 1062zM174 876L177 890 158 940 145 942 143 920 148 895z"],
];
const BORDERS = "M960 640L935 655 905 640 866 672M866 672L935 712 975 690 965 640M882 678L884 735 845 738M832 704H845L862 676M935 712L918 740 895 745 870 750 862 765 850 758M935 712L930 740 918 745 918 780M930 745L985 742 970 770 945 785M975 690L990 697 988 745 1000 765 975 790M1040 648V697H1095M1040 697L1030 725 1030 750M1035 700L990 690M990 770L1040 750 1060 765 1095 745 1110 732M1030 755L1065 790 1110 790 1122 790M1065 790L1062 840 1075 865 1108 868M1062 840L1040 845 1030 895M975 840L1005 850 1028 870 1028 895M974 902H1030L1012 905V950L1004 962M1030 897L1060 905 1070 890 1092 880M1012 945L1050 930 1068 905M1068 905L1080 925M963 798L990 795 1000 780 1028 792M872 788L870 762M895 784L895 745M910 782L912 750M1085 760L1095 780 1120 795M1140 758L1155 765M1055 968l8-8 6 8-8 8zM850 740L870 750M975 412M980 490L975 455 990 415 1015 392M1060 380L1045 385 1040 415M874 582V612M943 560L975 555 1000 545 985 535M1000 545L1030 545 1050 530M1022 500L1035 530 1025 545 1045 560M1035 515L1080 515M1015 562L1040 575 1055 575M1000 560L1020 580 1020 600M1030 485L1055 490M985 530L1015 530M560 870L563 905 568 928 600 925 612 915M568 928L556 950 552 1000 543 1060 540 1085 552 1105M600 925L622 950M620 970L622 995M505 812L520 832 505 838M520 812L535 820 556 828M545 755L545 775 560 785 572 800M603 768L612 790 608 798M622 782L625 798M445 735L452 720M460 732L475 740M1195 570L1230 575 1270 590 1300 580 1320 586M1195 598L1220 605 1260 628 1230 628 1225 650 1235 680M1260 628L1285 615 1300 605M1260 655L1285 640 1300 630M1205 590L1240 610M1105 640L1135 612 1150 640M1130 588L1160 605M1425 700L1435 715 1455 718 1465 740M1435 740L1450 730M1628 823V855M1470 808L1485 805 1510 795M1410 690L1420 720M1090 620L1098 640 1115 645";

@customElement("world-map")
class WorldMap extends LitElement {
  static styles = [shared, css`
    :host { position: relative; }
    .map { display: block; width: 634px; height: 339px; }
    .land { stroke: #84b7d6; stroke-width: 1.200; stroke-linejoin: round; fill-rule: nonzero; }
    .line { fill: none; stroke: #86b9d8; stroke-width: 2; stroke-linejoin: round; }
    .sea { fill: #569dca; }
    .z { position: absolute; left: 25px; width: 13px; height: 13px; border-radius: 3px; background: #292929; color: #fff; font: 15px/20px "Liberation Sans", sans-serif; padding-left: 4px; overflow: visible; }
    .in { top: 26px; } .out { top: 51px; }
  `];
  render() {
    return html`
      <svg class="map" viewBox="18 171 1902 1017" preserveAspectRatio="none">
        ${WEST.map(([f, d]) => svg`<path class="land" fill=${f} d=${d}/>`)}
        <g transform="translate(990 0)">
          ${EAST.map(([f, d]) => svg`<path class="land" fill=${f} d=${d}/>`)}
          <path class="sea" d="M162 562L180 554 192 575 188 590 197 600 195 613 182 615 172 605 175 590 165 575z"/>
          <path class="sea" d="M68 572L75 562 90 568 100 562 105 570 140 584 120 590 90 586 65 594 58 588z"/>
        </g>
        <path class="line" d=${BORDERS}/>
      </svg>
      <span class="z in">+</span><span class="z out">−</span>`;
  }
}

@customElement("calendar-grid")
class CalendarGrid extends LitElement {
  static styles = [shared, css`
    .g { display: grid; grid-template-columns: 94px 90px 92px 92px 95px 78px 90px; grid-auto-rows: 37px; text-align: center; line-height: 37px; font-size: 15.700px; }
    b { font-weight: 700; }
    .m { grid-column: 2 / 7; }
    .off { color: #777; }
  `];
  render() {
    const days = [26, 27, 28, 29, 30, ...Array.from({ length: 31 }, (_, i) => i + 1), 1, 2, 3, 4, 5, 6];
    return html`<div class="g">
      <b>«</b><b class="m">May 2020</b><b>»</b>
      ${["Su", "Mo", "Tu", "We", "Th", "Fr", "Sa"].map((d) => html`<b>${d}</b>`)}
      ${days.map((d, i) => html`<span class=${i < 5 || i > 35 ? "off" : ""}>${d}</span>`)}
    </div>`;
  }
}

@customElement("task-bar")
class TaskBar extends LitElement {
  static styles = [shared, css`
    :host { height: 50px; background: #050708; display: flex; position: relative; overflow: hidden; color: #fff; font: 15px/20px "Open Sans", sans-serif; }
    .ghost { position: absolute; white-space: nowrap; color: #45484b; }
    .g1 { left: 111px; top: 0; font-weight: 600; font-size: 16px; letter-spacing: -.2px; }
    .g2 { left: 366px; top: 1px; font-size: 16px; color: #2f3235; }
    .g3 { left: 83px; top: 30px; font-size: 16px; color: #2b2e31; }
    .g4 { left: 375px; top: 28px; width: 30px; height: 24px; border-radius: 12px; background: #0c141b; text-align: center; line-height: 24px; color: #5a5e62; font-size: 15px; }
    .g5 { left: 483px; top: 11px; font-size: 16.500px; color: #1d1f21; letter-spacing: -.2px; }
    .g6 { left: 41px; top: 16px; font-size: 18px; font-weight: 600; color: #303235; }
    .g7 { left: 26px; top: 34px; font-size: 8px; color: #35383a; }
    .gs { position: absolute; left: 0; top: 0; width: 1920px; height: 50px; fill: none; stroke: #15181a; stroke-width: 2; }
    .a { position: relative; height: 50px; display: flex; align-items: center; justify-content: center; }
    .a .ic { width: 30px; height: 30px; }
    .a.run { border-bottom: 3px solid #bcb4b8; padding-top: 3px; }
    .a.on { background: rgba(255,255,255,.24); }
    .start { width: 46px; } .start .ic { width: 35px; height: 35px; }
    .w1 { width: 51px; margin-left: 13px; } .w2 { width: 62px; margin-left: 5px; } .w3 { width: 61px; margin-left: 1px; } .w4 { width: 51px; margin-left: 6px; } .w5 { width: 51px; margin-left: 11px; }
    .tray { position: relative; margin-left: auto; display: flex; align-items: center; padding-right: 30px; }
    .t { width: 30.300px; display: flex; justify-content: center; position: relative; }
    .red { position: absolute; right: 4px; bottom: -1px; background: #ee4444; border-radius: 6px; width: 11px; height: 11px; font-size: 8px; line-height: 10px; text-align: center; }
    .eng { width: 44px; text-align: center; letter-spacing: -.4px; font-size: 14.500px; }
    .clock { width: 81px; text-align: center; line-height: 23px; letter-spacing: -.6px; padding-left: 3px; font-size: 14.800px; white-space: nowrap; }
    .act { margin-left: 21px; position: relative; }
    .one { position: absolute; left: 9px; top: 10px; width: 20px; height: 20px; border-radius: 50%; background: #2b2b2b; border: 1px solid #8a8a8a; text-align: center; line-height: 18px; font-size: 14px; }
    .edge { position: absolute; right: 5px; top: 0; width: 1px; height: 50px; background: #55585a; }
  `];
  render() {
    const app = (n: string, c: string) => html`<div class="a ${c}">${icon(n)}</div>`;
    return html`
      <span class="ghost g1">UzDev Jobs - IT Jobs [работае...</span><span class="ghost g2">12:31</span>
      <span class="ghost g3">#Ташкент #frontend FRONTEND РА...</span><span class="ghost g4">39</span>
      <span class="ghost g5">Написать сообщение...</span><span class="ghost g6">BS</span><span class="ghost g7">UzDev_Jobs</span>
      <svg class="gs" viewBox="0 0 1920 50">
        <path d="M103 7v11l-7-5z" fill="#303336" stroke="none"/>
        <path d="M436 24l12-10q6-3 8 2 1 4-2 7l-14 12q-4 1-4-3l12-12M434 27q-2 8 5 7l16-14" stroke="#2a2d2f"/>
        <g stroke="#0d2138"><circle cx="1467.500" cy="21.500" r="12"/><circle cx="1463" cy="18" r="1"/><circle cx="1472" cy="18" r="1"/><path d="M1461 24q6.500 7 13 0"/></g>
        <rect x="1520" y="9" width="9" height="19" rx="4.500"/><path d="M1515 21q0 12 9.500 12t9.500-12M1524 33v5"/>
        <g stroke="#0d2138"><circle cx="1583" cy="21" r="12"/></g><circle cx="1627" cy="21" r="12"/><path d="M1621 24q6 7 12 0M1659 30V10l6 5h12l6-5v20q-12 8-24 0zM1714 14q-12 0-11 12 4 14 12 10 8 4 12-10 0-12-13-12zq0-6 6-8"/>
        <circle cx="1760" cy="21" r="12"/><path d="M1752 12q8 9 0 18M1768 12q-8 9 0 18M1789 34V22l5-10h17l5 10v12zM1842 30q-9-7-9-12a10 10 0 0 1 20 0q0 5-7 12zM1893 34q-13-9-13-18t10-6l3 3 3-3q10-3 10 6t-13 18z"/>
      </svg>
      ${app("finger", "start")}${app("vscode", "run w1")}${app("postman", "w2")}${app("chrome", "run on w3")}${app("folder", "run w4")}${app("telegram", "run w5")}
      <div class="tray">
        <div class="t">${icon("radar")}</div><div class="t">${icon("bt")}</div>
        <div class="t">${icon("telegram")}<span class="red">..3</span></div>
        <div class="t">${icon("flag")}</div><div class="t">${icon("battery")}</div><div class="t">${icon("speaker")}</div><div class="t">${icon("wifi")}</div>
        <span class="eng">ENG</span>
        <div class="clock">12:57<br>21.05.2020</div>
        <div class="act">${icon("action")}<span class="one">1</span></div>
      </div>
      <i class="edge"></i>`;
  }
}

@customElement("app-root")
class AppRoot extends LitElement {
  static styles = [shared, css`
    :host { width: 1920px; height: 1080px; overflow: hidden; display: flex; flex-direction: column; font-family: "Noto Sans CJK SC", "Open Sans", sans-serif; }
    .page { flex: 1; min-height: 0; display: flex; background: #ecf0f5; }
    .main { flex: 1; min-width: 0; overflow: hidden; }
    .top { height: 63px; background: #3c8dbc; color: #fff; display: flex; position: relative; padding: 0 19px 0 18px; font-size: 15.700px; line-height: 62px; }
    .top .bars { width: 16px; height: 16px; margin-top: 23px; }
    .mail { margin: 22px 0 0 auto; position: relative; height: 20px; width: 20px; }
    .mail em { position: absolute; left: 14px; top: -11px; width: 14px; height: 15px; background: #00a65a; border-radius: 3px; font: 700 11px/15px "Noto Sans CJK SC", sans-serif; text-align: center; }
    .who { margin-left: 35px; width: 31px; padding-top: 16px; line-height: 25px; height: 90px; color: #fff; }
    .who div { margin-left: 1px; }
    .who .ic { color: #3c8dbc; margin-bottom: -1px; }
    .nm { margin-left: 13px; }
    .title { height: 70px; padding: 0 0 0 18px; display: flex; align-items: baseline; gap: 11px; font-size: 27px; line-height: 66px; color: #333; }
    .title small { font-size: 16.900px; font-weight: 300; color: #777; }
    .cols { display: flex; gap: 37px; padding: 0 19px 0 18px; align-items: flex-start; }
    .left { width: 903px; display: flex; flex-direction: column; gap: 25px; }
    .first { height: 302px; }
    .second { height: 600px; --head: 64px; --lh: 46px; }
    .right { flex: 1; display: flex; flex-direction: column; gap: 25px; }
    .card { border-radius: 4px; color: #fff; box-shadow: 0 1px 1px rgba(0,0,0,.12); }
    .blue { --bg: #3c8dbc; height: 389px; background: linear-gradient(#67a8ce, #3c8dbc); }
    .green { --bg: #00a65a; height: 357px; background: linear-gradient(#00ca6d, #00a65a); }
    .ch { height: 50px; display: flex; align-items: flex-start; padding: 6px 12px 0 10px; font-size: 20.300px; line-height: 35px; }
    .ch > .ic { margin: 6px 3px 0 -2px; width: 24px; height: 24px; }
    .green .ch > .ic { width: 23px; height: 23px; margin: 5px 9px 0 2px; --bg: #00c468; }
    .tools { margin-left: auto; display: flex; gap: 6px; }
    .green .tools { gap: 4px; }
    .tb { height: 35px; width: 37px; border-radius: 4px; background: var(--bg); display: flex; align-items: center; justify-content: center; }
    .green .tb { height: 34px; width: 36px; }
    .tb + .tb { width: 39px; }
    .green .tb + .tb { width: 37px; }
    .tb .ic { width: 14px; height: 14px; }
    .blue .tb + .tb .ic { width: 16px; height: 16px; }
    .cal { padding-top: 5px; padding-left: 1px; }
    .sb { width: 21px; background: #f1f1f1; display: flex; flex-direction: column; align-items: center; justify-content: space-between; padding: 9px 0 6px; }
    .sb .th { width: 17px; height: 529px; background: #c1c1c1; margin: 7px 0 auto; }
    .up { border: 5px solid transparent; border-top: 0; border-bottom-color: #a3a3a3; }
    .dn { border: 5px solid transparent; border-bottom: 0; border-top-color: #505050; }
  `];
  render() {
    return html`
      <browser-chrome></browser-chrome>
      <div class="page">
        <side-nav></side-nav>
        <div class="main">
          <div class="top">
            ${icon("bars", "bars")}
            <div class="mail">${icon("mailo")}<em>7</em></div>
            <div class="who">${icon("broken")}<div>User<br>Image</div></div>
            <span class="nm">Tursunboyev Jahongir</span>
          </div>
          <div class="title"><span>QonunSayt</span><small>Boshqaruv paneli</small></div>
          <div class="cols">
            <div class="left">
              <list-box class="first" heading="Kategoriyalar" action="Kategoriya qo\`shish" .rows=${[
                "Davlat ta’lim standartlari. Ta’lim dasturlari. Ta’lim jarayoni...",
                "Davlat ta’lim muassasalari va boshqa ta’lim tashkilotlari...",
                "Oliy ta’lim (bakalavriat va magistratura)...",
              ]}></list-box>
              <list-box class="second" heading="Qonunlar ro\`yhati" .rows=${[
                "Ўзбекистон Республикаси Ад...",
                "Ўзбекистон Республикаси Ад...",
                "ХАЛҚ ТАЪЛИМИ ТИЗИМИДА ТАЪЛ\uFFFD...",
                "ВАЗИРЛАР МАҲКАМАСИНИНГ «ОЛ...",
                "UMUMIY O‘RTA TA’LIMNING DAVLAT TA’LIM STANDA...",
                "OLIY TA’LIMNING DAVLAT TA’LIM STANDARTLARINI T...",
                "ЖАҲОН ИҚТИСОДИЁТИ ВА ДИПЛО\uFFFD...",
                "ЎЗБЕКИСТОН ЎҚУВ ЮРТЛАРИДА \uFFFD...",
              ]}></list-box>
            </div>
            <div class="right">
              <div class="card blue">
                <div class="ch">${icon("marker")}<span>Visitors</span><div class="tools"><div class="tb">${icon("minus")}</div><div class="tb">${icon("calendar")}</div></div></div>
                <world-map></world-map>
              </div>
              <div class="card green">
                <div class="ch">${icon("calendar")}<span>Calendar</span><div class="tools"><div class="tb">${icon("minus")}</div><div class="tb">${icon("times")}</div></div></div>
                <calendar-grid class="cal"></calendar-grid>
              </div>
            </div>
          </div>
        </div>
        <div class="sb"><i class="up"></i><i class="th"></i><i class="dn"></i></div>
      </div>
      <task-bar></task-bar>`;
  }
}
